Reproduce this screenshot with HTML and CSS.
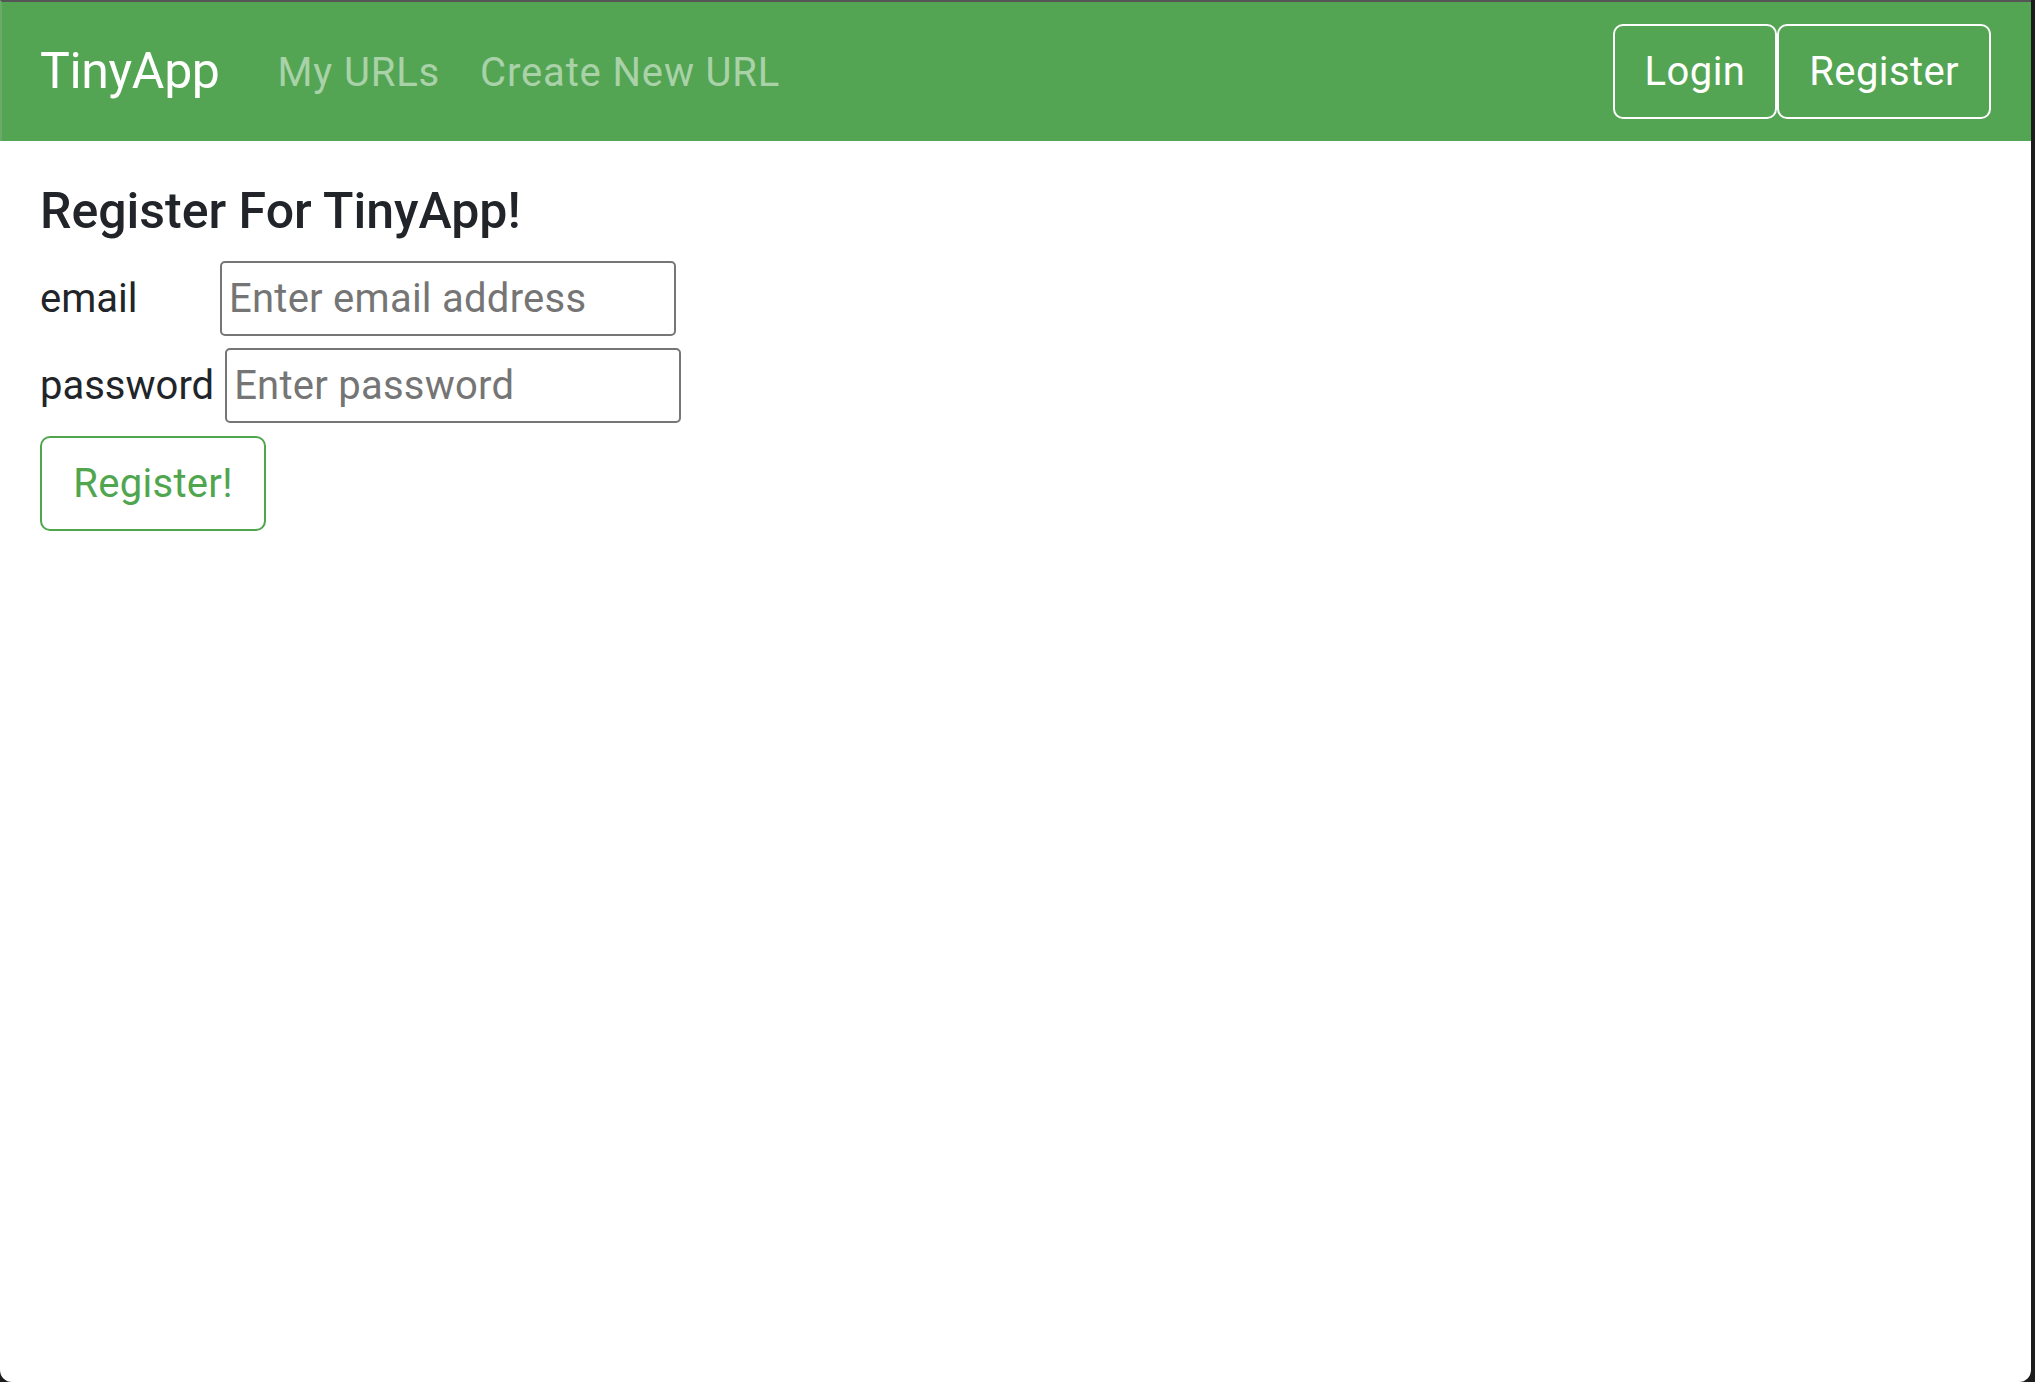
FILE: index.html
```html
<!DOCTYPE html>
<html lang="en">
<head>
<meta charset="utf-8">
<title>TinyApp - Register</title>
<link rel="stylesheet" href="styles.css">
</head>
<body>
  <div class="window">
    <nav class="navbar">
      <a class="brand" href="#">TinyApp</a>
      <ul class="nav-links">
        <li><a class="nav-link" href="#">My URLs</a></li>
        <li><a class="nav-link" href="#">Create New URL</a></li>
      </ul>
      <div class="nav-actions">
        <button class="btn btn-light" type="button">Login</button>
        <button class="btn btn-light" type="button">Register</button>
      </div>
    </nav>
    <main class="main">
      <h5 class="title">Register For TinyApp!</h5>
      <form class="form">
        <div class="field">
          <label class="field-label email-label" for="email">email</label>
          <input class="field-input" id="email" type="email" placeholder="Enter email address">
        </div>
        <div class="field">
          <label class="field-label" for="password">password</label>
          <input class="field-input" id="password" type="password" placeholder="Enter password">
        </div>
        <button class="btn btn-success" type="submit">Register!</button>
      </form>
    </main>
  </div>
</body>
</html>
```

FILE: styles.css
```css
* {
  box-sizing: border-box;
}

html, body {
  margin: 0;
  padding: 0;
  height: 100%;
}

body {
  background: #1c1c1e;
  display: flex;
  font-family: Roboto, "Liberation Sans", Arial, sans-serif;
  color: #212529;
}

.window {
  flex: 1;
  margin-right: 4px;
  background: #ffffff;
  border-radius: 0 0 12px 12px;
  overflow: hidden;
}

.navbar {
  height: 141px;
  display: flex;
  align-items: center;
  padding: 0 40px;
  background: #53a553;
  border-top: 2px solid #555555;
  border-left: 2px solid #6aaa6a;
}

.brand {
  font-size: 50px;
  line-height: 75px;
  letter-spacing: -0.35px;
  color: #ffffff;
  text-decoration: none;
  margin-left: -2px;
  margin-right: 38px;
}

.nav-links {
  display: flex;
  list-style: none;
  margin: 0;
  padding: 2px 0 0;
  flex: 1;
}

.nav-link {
  display: block;
  font-size: 40px;
  line-height: 60px;
  letter-spacing: 0.85px;
  padding: 0 20px;
  color: rgba(255, 255, 255, 0.5);
  text-decoration: none;
}

.nav-actions {
  display: flex;
  gap: 0;
}

.btn {
  font-family: inherit;
  font-size: 40px;
  line-height: 60px;
  height: 95px;
  padding: 0 30px;
  border-radius: 10px;
  background: transparent;
  cursor: pointer;
}

.btn-light {
  color: #ffffff;
  border: 2.5px solid #ffffff;
  letter-spacing: 0.4px;
}

.main {
  padding: 40px 40px 0;
}

.title {
  margin: 0 0 20px;
  font-size: 50px;
  line-height: 60px;
  font-weight: 500;
  color: #212529;
}

.form {
  display: flex;
  flex-direction: column;
  align-items: flex-start;
  gap: 12px;
}

.field {
  display: flex;
  align-items: center;
  height: 75px;
}

.field-label {
  font-size: 40px;
  line-height: 60px;
  margin-right: 11px;
  color: #212529;
}

.email-label {
  width: 169px;
}

.field-input {
  width: 456px;
  height: 75px;
  border: 2px solid #767676;
  border-radius: 5px;
  padding: 0 7px;
  font-family: inherit;
  font-size: 40px;
  letter-spacing: 0.25px;
  color: #212529;
  background: #ffffff;
}

.field-input::placeholder {
  color: #757575;
}

.btn-success {
  margin-top: 1px;
  color: #4fa64f;
  border: 2.5px solid #4fa64f;
  width: 226px;
  padding: 0;
  letter-spacing: 0.3px;
}
```
